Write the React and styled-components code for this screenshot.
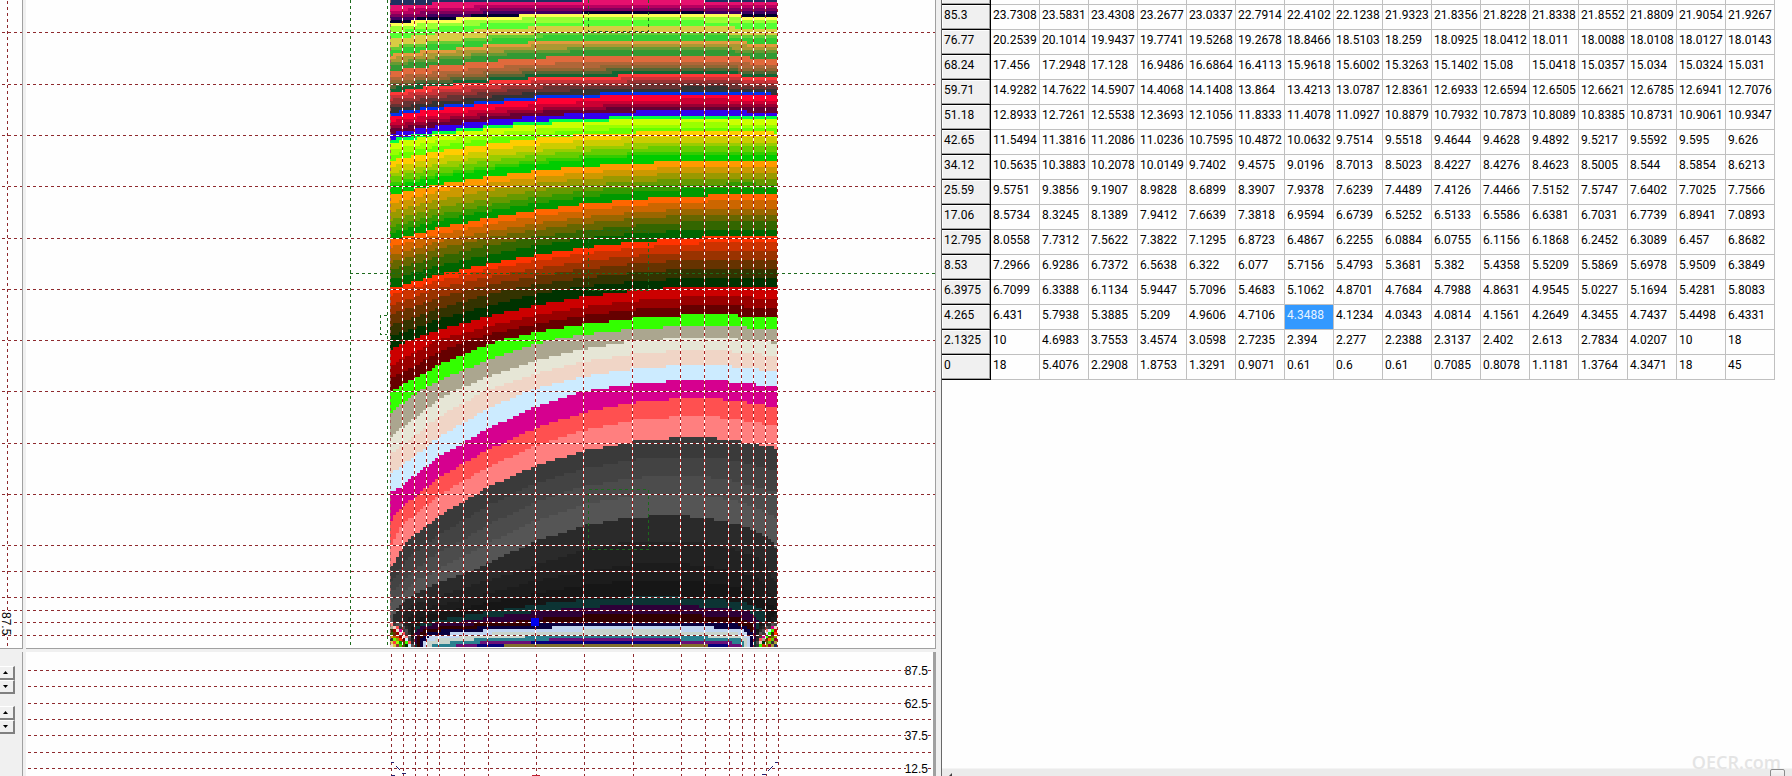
import React from "react";
import styled, { createGlobalStyle, css } from "styled-components";

const GlobalStyle = createGlobalStyle`
  * { box-sizing: border-box; }
  body { margin: 0; background: #f0f0f0; overflow: hidden; }
`;

/* ---------- table data ---------- */

const ROWS = [
  ["85.3", "23.7308 23.5831 23.4308 23.2677 23.0337 22.7914 22.4102 22.1238 21.9323 21.8356 21.8228 21.8338 21.8552 21.8809 21.9054 21.9267"],
  ["76.77", "20.2539 20.1014 19.9437 19.7741 19.5268 19.2678 18.8466 18.5103 18.259 18.0925 18.0412 18.011 18.0088 18.0108 18.0127 18.0143"],
  ["68.24", "17.456 17.2948 17.128 16.9486 16.6864 16.4113 15.9618 15.6002 15.3263 15.1402 15.08 15.0418 15.0357 15.034 15.0324 15.031"],
  ["59.71", "14.9282 14.7622 14.5907 14.4068 14.1408 13.864 13.4213 13.0787 12.8361 12.6933 12.6594 12.6505 12.6621 12.6785 12.6941 12.7076"],
  ["51.18", "12.8933 12.7261 12.5538 12.3693 12.1056 11.8333 11.4078 11.0927 10.8879 10.7932 10.7873 10.8089 10.8385 10.8731 10.9061 10.9347"],
  ["42.65", "11.5494 11.3816 11.2086 11.0236 10.7595 10.4872 10.0632 9.7514 9.5518 9.4644 9.4628 9.4892 9.5217 9.5592 9.595 9.626"],
  ["34.12", "10.5635 10.3883 10.2078 10.0149 9.7402 9.4575 9.0196 8.7013 8.5023 8.4227 8.4276 8.4623 8.5005 8.544 8.5854 8.6213"],
  ["25.59", "9.5751 9.3856 9.1907 8.9828 8.6899 8.3907 7.9378 7.6239 7.4489 7.4126 7.4466 7.5152 7.5747 7.6402 7.7025 7.7566"],
  ["17.06", "8.5734 8.3245 8.1389 7.9412 7.6639 7.3818 6.9594 6.6739 6.5252 6.5133 6.5586 6.6381 6.7031 6.7739 6.8941 7.0893"],
  ["12.795", "8.0558 7.7312 7.5622 7.3822 7.1295 6.8723 6.4867 6.2255 6.0884 6.0755 6.1156 6.1868 6.2452 6.3089 6.457 6.8682"],
  ["8.53", "7.2966 6.9286 6.7372 6.5638 6.322 6.077 5.7156 5.4793 5.3681 5.382 5.4358 5.5209 5.5869 5.6978 5.9509 6.3849"],
  ["6.3975", "6.7099 6.3388 6.1134 5.9447 5.7096 5.4683 5.1062 4.8701 4.7684 4.7988 4.8631 4.9545 5.0227 5.1694 5.4281 5.8083"],
  ["4.265", "6.431 5.7938 5.3885 5.209 4.9606 4.7106 4.3488 4.1234 4.0343 4.0814 4.1561 4.2649 4.3455 4.7437 5.4498 6.4331"],
  ["2.1325", "10 4.6983 3.7553 3.4574 3.0598 2.7235 2.394 2.277 2.2388 2.3137 2.402 2.613 2.7834 4.0207 10 18"],
  ["0", "18 5.4076 2.2908 1.8753 1.3291 0.9071 0.61 0.6 0.61 0.7085 0.8078 1.1181 1.3764 4.3471 18 45"],
].map(([depth, cells]) => ({ depth, cells: cells.split(" ") }));

const SELECTED = { depth: "4.265", column: 6 };

/* ---------- contour map ---------- */

const GRID_X = [390, 402, 414, 426, 438, 463, 487, 535, 583, 632, 680, 704, 728, 741, 753, 765, 777];
const GRID_Y = [32, 84, 135, 186, 238, 289, 340, 391, 443, 494, 545, 571, 597, 610, 622, 635];
const MAP = { left: 390, right: 777, bottom: 647, cell: 3 };

/* values of the first column, which the table has scrolled out of view */
const FIRST_COLUMN = [23.9, 20.4, 17.6, 15.1, 13.05, 11.72, 10.73, 9.72, 9, 8.5, 7.6, 7.3, 7.2, 18, 45];

const FIELD = [
  { y: -19, values: Array(17).fill(39) },
  { y: 32, values: [33.4, 33.3, 33.2, 33, 32.9, 32.7, 32.4, 32.1, 32, 32, 32, 32, 32.1, 32.2, 32.3, 32.3, 32.4] },
  { y: 84, values: [28.1, 28, 27.8, 27.7, 27.6, 27.4, 27.2, 26.8, 26.6, 26.5, 26.4, 26.4, 26.4, 26.5, 26.6, 26.6, 26.6] },
  ...ROWS.map((row, i) => ({
    y: [...GRID_Y.slice(2), 647][i],
    values: [FIRST_COLUMN[i], ...row.cells.map(Number)],
  })),
];

const mix = (a, b, t) => a + (b - a) * t;

function fieldValue(x, y) {
  let r = FIELD.findIndex((row) => row.y > y) - 1;
  if (r < 0) r = FIELD.length - 2;
  let c = GRID_X.findIndex((gx) => gx > x) - 1;
  if (c < 0) c = GRID_X.length - 2;
  const tx = (x - GRID_X[c]) / (GRID_X[c + 1] - GRID_X[c]);
  const ty = (y - FIELD[r].y) / (FIELD[r + 1].y - FIELD[r].y);
  const above = mix(FIELD[r].values[c], FIELD[r].values[c + 1], tx);
  const below = mix(FIELD[r + 1].values[c], FIELD[r + 1].values[c + 1], tx);
  return mix(above, below, ty);
}

/* colour scale: where each colour starts along the x = 680 grid line */
const SCALE = [
  [0, "#e6106e"], [4, "#b80060"], [7, "#80005c"], [10, "#400060"], [12, "#000030"],
  [14, "#ffff55"], [17, "#99ff33"], [21, "#55ff33"], [26, "#d8cc44"], [32, "#66cc33"],
  [35, "#33cc33"], [40, "#e09a3c"], [43, "#aa9933"], [47, "#669933"], [50, "#339933"],
  [55, "#e06a3c"], [61, "#b06638"], [65, "#906633"], [68, "#556633"], [71, "#116633"],
  [74, "#ff3838"], [77, "#cc3338"], [80, "#993333"], [83, "#663333"], [87, "#333333"],
  [91, "#0033ee"], [94, "#ff0033"], [99, "#cc0033"], [103, "#990033"], [106, "#660033"],
  [110, "#3300ee"], [115, "#00ff44"], [118, "#ccff00"], [123, "#99ff00"], [127, "#66ff00"],
  [131, "#ffcc00"], [136, "#cccc00"], [142, "#99cc00"], [146, "#66cc00"], [151, "#33cc00"],
  [154, "#00cc00"], [161, "#ff9900"], [167, "#cc9900"], [173, "#999900"], [179, "#669900"],
  [184, "#339900"], [189, "#009900"], [196, "#ff6600"], [202, "#cc6600"], [209, "#996600"],
  [215, "#666600"], [222, "#336600"], [230, "#006600"], [238, "#ff3300"], [244, "#cc3300"],
  [252, "#993300"], [260, "#663300"], [269, "#333300"], [278, "#003300"], [287, "#cc0000"],
  [297, "#990000"], [306, "#660000"], [315, "#33ff00"], [326, "#aba68f"], [338, "#e6e6d6"],
  [350, "#f0d5c6"], [365, "#ccebff"], [380, "#d6008f"], [398, "#ff5050"], [416, "#ff7f7f"],
  [437, "#3a3a3a"], [456, "#434343"], [475, "#4c4c4c"], [493, "#555555"], [515, "#2a2a2a"],
  [540, "#222222"], [563, "#1c1c1c"], [580, "#161616"], [597, "#0c3434"], [605, "#2d0038"],
  [614, "#300000"], [622, "#080040"], [626, "#c0d4f0"], [630, "#c8d4cc"], [635, "#2a808f"],
  [639, "#6a1078"], [642, "#08007c"], [644, "#80702c"], [646, "#207c1c"],
].map(([y, color]) => ({ limit: fieldValue(680, y), color }));

const OVERFLOW = ["#203060", "#806080", "#f0d0c0", "#ff9900", "#33cc33", "#cc3300", "#99cc00", "#006633", "#ffcc00"];

function colorOf(value) {
  if (value > SCALE[0].limit) {
    return OVERFLOW[Math.floor(value - SCALE[0].limit) % OVERFLOW.length];
  }
  let color = SCALE[0].color;
  for (const band of SCALE) {
    if (band.limit >= value) color = band.color;
  }
  return color;
}

function buildBands() {
  const paths = {};
  const { left, right, bottom, cell } = MAP;
  for (let x = left; x < right; x += cell) {
    let start = bottom;
    let current = null;
    for (let y = bottom - cell; y > -cell; y -= cell) {
      const color = colorOf(fieldValue(x + 1, y + 1));
      if (color !== current) {
        if (current) paths[current] = (paths[current] || "") + `M${x} ${start}h${cell}V${y + cell}h-${cell}z`;
        start = y + cell;
        current = color;
      }
    }
    paths[current] = (paths[current] || "") + `M${x} ${start}h${cell}V-3h-${cell}z`;
  }
  return Object.entries(paths);
}

const BANDS = buildBands();

/* ---------- shell ---------- */

const Window = styled.div`
  display: grid;
  grid-template-columns: minmax(0, 941fr) minmax(0, 851fr);
  grid-template-rows: minmax(0, 1fr);
  height: 100vh;
  font-family: "Liberation Sans", Arial, sans-serif;
  font-size: 12px;
  color: #000;
`;

const Graphs = styled.section`
  display: grid;
  grid-template-columns: 23px minmax(0, 1fr);
  grid-template-rows: minmax(0, 649fr) minmax(0, 124fr);
  gap: 3px;
  min-height: 0;
  padding-right: 5px;
  background: #f0f0f0;
`;

const Pane = styled.div`
  min-height: 0;
  overflow: hidden;
  background: #fefefe;
  border-right: ${(p) => (p.$edge || 1)}px solid #a0a0a0;
  border-bottom: ${(p) => (p.$open ? "none" : "1px solid #a0a0a0")};
`;

const Drawing = styled.svg`
  display: block;
  width: 100%;
  height: 100%;
  shape-rendering: crispEdges;
`;

const AxisText = styled.text`
  font-family: "Liberation Sans", Arial, sans-serif;
  font-size: 12px;
  fill: #000;
`;

const Controls = styled.div`
  display: flex;
  flex-direction: column;
  gap: 12px;
  min-height: 0;
  padding-top: 14px;
  border-right: 1px solid #a0a0a0;
  background: #f0f0f0;
`;

const Spinner = styled.div`
  display: flex;
  flex-direction: column;
  width: 15px;
`;

const SpinButton = styled.button`
  display: flex;
  align-items: center;
  height: 14px;
  padding: 0 0 0 3px;
  border: solid;
  border-width: 1px 2px 2px 0;
  border-color: #fff #808080 #808080 #fff;
  background: #f0f0f0;
`;

/* ---------- charts ---------- */

const RED = "#8e2a2e";
const GREEN = "#1c6a1c";

function Dash({ color = RED, over, ...line }) {
  return (
    <>
      {over && <line {...line} stroke={over} />}
      <line {...line} stroke={color} strokeDasharray="3 3" />
    </>
  );
}

function ContourMap() {
  return (
    <Drawing role="img" aria-label="Contour map">
      <g transform="translate(-26 0)">
        {GRID_Y.map((y) => (
          <Dash key={y} x1={27} x2="110%" y1={y + 0.5} y2={y + 0.5} />
        ))}
        {BANDS.map(([color, d]) => (
          <path key={color} d={d} fill={color} />
        ))}
        {GRID_Y.map((y) => (
          <Dash key={y} x1={MAP.left} x2={MAP.right} y1={y + 0.5} y2={y + 0.5} color="#fff" over="#801818" />
        ))}
        {GRID_X.map((x, i) =>
          i === 0 ? (
            <Dash key={x} x1={x + 0.5} x2={x + 0.5} y1={0} y2={647} color="#a06060" />
          ) : (
            <Dash key={x} x1={x + 0.5} x2={x + 0.5} y1={0} y2={647} color="#fff" over="#a82020" />
          )
        )}
        <g fill="none" stroke={GREEN} strokeDasharray="3 3">
          <path d="M350.5 0V648M387.5 0V648M350 273.5H960M387 315.5H380.5V334.5H387" />
          <path d="M588.5 0V31.5H648.5V0M588.5 230.5H648.5V290.5H588.5zM588.5 489.5H648.5V549.5H588.5z" />
        </g>
        <rect x={531} y={618} width={8} height={8} fill="#00e" />
      </g>
    </Drawing>
  );
}

function DepthAxis() {
  return (
    <Drawing role="img" aria-label="Vertical axis">
      {GRID_Y.map((y) => (
        <Dash key={y} x1={2} x2={22} y1={y + 0.5} y2={y + 0.5} />
      ))}
      <Dash x1={7.5} x2={7.5} y1={1} y2={647} />
      <rect x={1} y={613} width={12} height={22} fill="#fefefe" />
      <AxisText transform="translate(2 612) rotate(90)">87.5</AxisText>
    </Drawing>
  );
}

const PROFILE_LINES = [
  [18, "87.5"], [34], [51, "62.5"], [67], [83, "37.5"], [100], [116, "12.5"],
];

function ProfileChart() {
  return (
    <Drawing role="img" aria-label="Section profile">
      <g transform="translate(-26 0)">
        {GRID_X.map((x) => (
          <Dash key={x} x1={x + 1.5} x2={x + 1.5} y1={2} y2={124} />
        ))}
        <path d="M391 110h3M396 114l4 4M402 121h4M391 123h4M778 110h-3M773 114l-5 5M766 122h-4" stroke="#202070" fill="none" />
        <path d="M532 123.5h8" stroke="#c02030" />
      </g>
      {PROFILE_LINES.map(([y]) => (
        <Dash key={y} x1={2} x2="100%" y1={y + 0.5} y2={y + 0.5} />
      ))}
      <svg x="100%" overflow="visible">
        {PROFILE_LINES.filter(([, label]) => label).map(([y, label]) => (
          <g key={label}>
            <rect x={-27} y={y - 6} width={22} height={12} fill="#fefefe" />
            <AxisText x={-5} y={y + 5} textAnchor="end">{label}</AxisText>
          </g>
        ))}
      </svg>
    </Drawing>
  );
}

function Spin({ name }) {
  return (
    <Spinner>
      <SpinButton type="button" aria-label={`Increase ${name}`}>
        <svg width="5" height="3"><path d="M0 3L2.500 0L5 3z" /></svg>
      </SpinButton>
      <SpinButton type="button" aria-label={`Decrease ${name}`}>
        <svg width="5" height="3"><path d="M0 0H5L2.500 3z" /></svg>
      </SpinButton>
    </Spinner>
  );
}

/* ---------- data grid ---------- */

const GridPane = styled.section`
  position: relative;
  display: flex;
  flex-direction: column;
  min-width: 0;
  overflow: hidden;
  background: #fefefe;
  border-left: 1px solid #696969;
`;

const GridBody = styled.div`
  flex: 1;
  min-height: 0;
  overflow: hidden;
`;

const DataTable = styled.table`
  table-layout: fixed;
  width: 833px;
  border-collapse: separate;
  border-spacing: 0;
  font-family: Roboto, "Liberation Sans", Arial, sans-serif;
  font-size: 12px;
  line-height: 16px;
`;

const cell = css`
  width: 49px;
  height: ${(p) => (p.$clipped ? 5 : 25)}px;
  text-align: left;
  vertical-align: top;
  font-weight: 400;
  white-space: nowrap;
`;

const DepthCell = styled.th`
  ${cell}
  padding: ${(p) => (p.$clipped ? 0 : "2px 0 0 2px")};
  background: #f0f0f0;
  border-right: 1px solid #000;
  border-bottom: 1px solid #000;
  box-shadow: inset -1px -1px #a0a0a0, inset 1px ${(p) => (p.$clipped ? 0 : 1)}px #fff;
`;

const ValueCell = styled.td`
  ${cell}
  padding: ${(p) => (p.$clipped ? 0 : "2px 0 0 2px")};
  border-right: 1px solid #c0c0c0;
  border-bottom: 1px solid #c0c0c0;
  background: ${(p) => (p.$selected ? "#3399ff" : "transparent")};
  color: ${(p) => (p.$selected ? "#e8f4ff" : "#000")};
`;

const ScrollTrack = styled.div`
  display: flex;
  justify-content: space-between;
  flex: none;
  height: 8px;
  padding: 0 7px 0 5px;
  overflow: hidden;
  background: #ebebeb;
  border-top: 1px solid #f4f4f4;
`;

const ScrollArrow = styled.button`
  display: flex;
  padding: 4px 0 0;
  border: 0;
  background: none;
`;

const ScrollThumb = styled.div`
  width: 15px;
  height: 16px;
  border: 1px solid #8c8c8c;
  border-radius: 2px;
  background: linear-gradient(#f6f6f6, #dcdcdc);
`;

const Watermark = styled.span`
  position: absolute;
  right: 11px;
  bottom: 4px;
  font-family: "Open Sans", sans-serif;
  font-size: 18px;
  font-weight: 600;
  line-height: 20px;
  color: #e4e4e4;
`;

function ValueGrid() {
  return (
    <DataTable>
      <tbody>
        <tr>
          <DepthCell $clipped />
          {ROWS[0].cells.map((_, i) => (
            <ValueCell key={i} $clipped />
          ))}
        </tr>
        {ROWS.map((row) => (
          <tr key={row.depth}>
            <DepthCell scope="row">{row.depth}</DepthCell>
            {row.cells.map((value, i) => (
              <ValueCell key={i} $selected={row.depth === SELECTED.depth && i === SELECTED.column}>
                {value}
              </ValueCell>
            ))}
          </tr>
        ))}
      </tbody>
    </DataTable>
  );
}

export default function App() {
  return (
    <Window>
      <GlobalStyle />
      <Graphs>
        <Pane><DepthAxis /></Pane>
        <Pane><ContourMap /></Pane>
        <Controls>
          <Spin name="first value" />
          <Spin name="second value" />
        </Controls>
        <Pane $open $edge={3}><ProfileChart /></Pane>
      </Graphs>
      <GridPane>
        <GridBody><ValueGrid /></GridBody>
        <ScrollTrack>
          <ScrollArrow type="button" aria-label="Scroll left">
            <svg width="5" height="10"><path d="M0 5L5 0V10z" fill="#404040" /></svg>
          </ScrollArrow>
          <ScrollThumb />
        </ScrollTrack>
        <Watermark>OECR.com</Watermark>
      </GridPane>
    </Window>
  );
}
